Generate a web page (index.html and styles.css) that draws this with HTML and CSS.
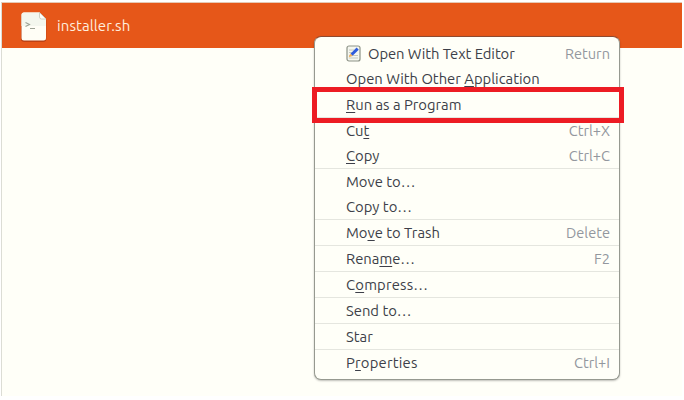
FILE: index.html
```
<!DOCTYPE html>
<html lang="en">
<head>
<meta charset="utf-8">
<title>Files</title>
<link rel="stylesheet" href="styles.css">
</head>
<body>
<main class="window">
  <div class="file-row">
    <svg class="file-icon" width="28" height="32" viewBox="0 0 28 32">
      <path d="M4 1.7H19.5L26.3 8.5V27a3 3 0 0 1-3 3H4a3 3 0 0 1-3-3V4.700a3 3 0 0 1 3-3Z" transform="translate(0 .7)" fill="#b33b10"/>
      <path d="M4 1.500H19.500L26 8V27a2.500 2.500 0 0 1-2.500 2.500H4A2.500 2.500 0 0 1 1.500 27V4A2.500 2.500 0 0 1 4 1.500Z" fill="#fffef6"/>
      <path d="M4 1.500H19.500L26 8V15H1.500V4A2.500 2.500 0 0 1 4 1.500Z" fill="#f4f7ee"/>
      <path d="M19.500 1.500V6a2 2 0 0 0 2 2H26Z" fill="#fffef8" stroke="#c3c6ba" stroke-width=".8"/>
      <path d="M5.500 11.500l4 2-4 2M10 17.500h5" fill="none" stroke="#9da294" stroke-width="1.100"/>
    </svg>
    <span class="file-name">installer.sh</span>
  </div>
</main>
<nav class="menu">
  <div class="item"><svg class="edit-icon" width="15" height="17" viewBox="0 0 15 17">
      <rect x="1" y="1" width="13" height="15" rx="2" fill="#f5f7ef" stroke="#8d9387" stroke-width="1.200"/>
      <path d="M3 5h5M3 7.500h4M3 10.500h9M3 13h9" stroke="#c5c9c0" stroke-width="1"/>
      <path d="M5.500 9.800L11.700 3.600" stroke="#2e5cdc" stroke-width="3"/>
      <path d="M2.700 12.200L4.200 8.500L6.800 11.100Z" fill="#f4b15c"/>
    </svg><span class="label first">Open With Text Editor</span><kbd>Return</kbd></div>
  <div class="item"><span class="label">Open With Other <u>A</u>pplication</span></div>
  <div class="item sep"><span class="label"><u>R</u>un as a Program</span></div>
  <div class="item sep"><span class="label">Cu<u>t</u></span><kbd>Ctrl+X</kbd></div>
  <div class="item"><span class="label"><u>C</u>opy</span><kbd>Ctrl+C</kbd></div>
  <div class="item sep"><span class="label">Move to…</span></div>
  <div class="item"><span class="label">Copy to…</span></div>
  <div class="item sep"><span class="label">Mo<u>v</u>e to Trash</span><kbd>Delete</kbd></div>
  <div class="item sep"><span class="label">Rena<u>m</u>e…</span><kbd>F2</kbd></div>
  <div class="item sep"><span class="label wide">C<u>o</u>mpress…</span></div>
  <div class="item sep"><span class="label">Send to…</span></div>
  <div class="item sep"><span class="label">Star</span></div>
  <div class="item sep"><span class="label wide">P<u>r</u>operties</span><kbd>Ctrl+I</kbd></div>
</nav>
<div class="highlight"></div>
</body>
</html>
```
FILE: styles.css
```
* { box-sizing: border-box; }
body {
  margin: 0;
  width: 684px;
  height: 400px;
  overflow: hidden;
  background: #fff;
  font: 14.8px/25px Ubuntu, "Noto Sans", sans-serif;
  color: #3d3f49;
}
.window {
  width: 681px;
  height: 394px;
  margin: 2px 0 0 1px;
  background: #fffff8;
  border-left: 1px solid #dcddd5;
  border-top: 1px solid #e6c9b4;
}
.file-row {
  display: flex;
  align-items: center;
  height: 45px;
  padding-left: 18px;
  background: #e65719;
}
.file-icon { margin-top: 2px; }
.file-name { margin-left: 9px; font-size: 15px; letter-spacing: .1px; color: #ffeede; }
.menu {
  position: absolute;
  left: 314px;
  top: 36px;
  width: 306px;
  height: 344px;
  padding: 4px 0;
  background: #fffff8;
  border: 1px solid #969990;
  border-top-color: #8e4a30;
  border-radius: 7px;
  box-shadow: 0 1px 2px rgba(0, 0, 0, .25);
}
.item {
  display: flex;
  align-items: center;
  height: 25px;
  padding: 0 9px 0 31px;
  white-space: nowrap;
}
.sep { height: 26px; border-top: 1px solid #e5e6df; }
.edit-icon { margin: 0 7px 0 0; }
.first { letter-spacing: -.07px; }
.wide { letter-spacing: .2px; }
u { text-decoration-thickness: 1px; text-underline-offset: 2px; }
kbd { margin-left: auto; font: inherit; font-size: 14.6px; color: #93979e; }
.highlight {
  position: absolute;
  left: 312px;
  top: 87px;
  width: 312px;
  height: 36px;
  border: 5px solid #ed1c24;
}
```
